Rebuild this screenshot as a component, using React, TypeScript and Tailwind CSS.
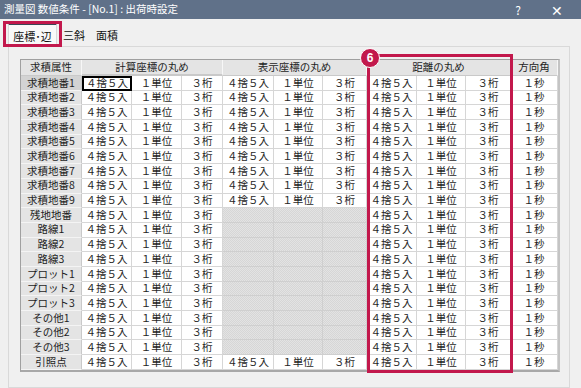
import React from "react";

const rowNames = [
  "求積地番1",
  "求積地番2",
  "求積地番3",
  "求積地番4",
  "求積地番5",
  "求積地番6",
  "求積地番7",
  "求積地番8",
  "求積地番9",
  "残地地番",
  "路線1",
  "路線2",
  "路線3",
  "プロット1",
  "プロット2",
  "プロット3",
  "その他1",
  "その他2",
  "その他3",
  "引照点",
];

const cellCls =
  "flex items-center justify-center border-r border-b border-[#d6d6d6] bg-white text-[#1e1e1e] whitespace-nowrap";
const headCls =
  "flex items-center justify-center border-r border-b border-r-[#f7f7f7] border-b-[#c9c9c9] bg-[#e4e4e4] text-[#1e1e1e] whitespace-nowrap";
const emptyCls =
  "border-r border-b border-[#cfcfcf] bg-[#dedede] bg-[repeating-conic-gradient(#d6d6d6_0%_25%,#e3e3e3_0%_50%)] bg-[length:2px_2px]";

function Group({ disabled }: { disabled?: boolean }) {
  if (disabled) {
    return (
      <>
        <div className={emptyCls} />
        <div className={emptyCls} />
        <div className={emptyCls} />
      </>
    );
  }
  return (
    <>
      <div className={cellCls}>４捨５入</div>
      <div className={cellCls}>１単位</div>
      <div className={cellCls}>３桁</div>
    </>
  );
}

export default function App() {
  return (
    <div className="w-[581px] h-[388px] overflow-hidden bg-[#f0f0f0] flex flex-col font-['Noto_Sans_CJK_JP','Noto_Sans',sans-serif] text-[10.5px] leading-none">
      {/* title bar */}
      <div className="h-[19px] shrink-0 bg-[#607189] flex items-center justify-between pl-[4px] pr-[18px] text-white">
        <span className="text-[10.5px]">測量図 数値条件 - [No.1] : 出荷時設定</span>
        <div className="flex items-center gap-[30px] text-[12px]">
          <span>?</span>
          <span className="text-[14px]">✕</span>
        </div>
      </div>

      {/* tabs */}
      <div className="relative h-[27px] shrink-0 flex items-end pl-[8px]">
        <div className="relative z-10 w-[49px] h-[24px] -mb-px flex items-center justify-center bg-[#f9f9f9] border border-[#d9d9d9] border-b-0 border-t-2 border-t-[#3b4656] text-[11px] text-[#111]">
          座標･辺
        </div>
        <div className="h-[22px] flex items-center pl-[6px] pr-[11px] text-[11px] text-[#111]">三斜</div>
        <div className="h-[22px] flex items-center text-[11px] text-[#111]">面積</div>
        <div className="absolute left-[3px] top-[2px] w-[59px] h-[26px] border-[3px] border-[#c2184c] z-20" />
      </div>

      {/* panel */}
      <div className="ml-[8px] w-[562px] flex-1 border border-[#d9d9d9] pt-[12px] pl-[11px]">
        <div className="relative w-[540px]">
          <div className="border border-[#a0a0a0] border-r-2 border-b-2 border-r-[#c4c4c4] border-b-[#a8a8a8]">
            <div className="grid grid-cols-[61px_50px_50px_41px_51px_49px_44px_50px_49px_45px_47px] grid-rows-[16px_repeat(20,14.7px)]">
              <div className={headCls}>求積属性</div>
              <div className={`${headCls} col-span-3 bg-[#d7d7d7] border-b-2 border-b-[#2e3d56]`}>
                計算座標の丸め
              </div>
              <div className={`${headCls} col-span-3`}>表示座標の丸め</div>
              <div className={`${headCls} col-span-3`}>距離の丸め</div>
              <div className={headCls}>方向角</div>

              {rowNames.map((name, i) => (
                <React.Fragment key={name}>
                  <div
                    className={`flex items-center justify-center border-r border-b border-r-[#c9c9c9] border-b-[#f4f4f4] text-[#1e1e1e] whitespace-nowrap ${
                      i === 0 ? "bg-[#d3d3d3]" : "bg-[#e4e4e4]"
                    }`}
                  >
                    {name}
                  </div>
                  {i === 0 ? (
                    <div className="flex items-center justify-center border-2 border-black bg-white text-[#1e1e1e] whitespace-nowrap">
                      ４捨５入
                    </div>
                  ) : (
                    <div className={cellCls}>４捨５入</div>
                  )}
                  <div className={cellCls}>１単位</div>
                  <div className={cellCls}>３桁</div>
                  <Group disabled={i >= 9 && i <= 18} />
                  <Group />
                  <div className={cellCls}>１秒</div>
                </React.Fragment>
              ))}
            </div>
          </div>

          {/* highlight box */}
          <div className="absolute left-[347px] top-[-5px] w-[146px] h-[319px] border-[3px] border-[#c2184c]" />
          <div className="absolute left-[340px] top-[-11px] w-[20px] h-[20px] rounded-full bg-[#c2184c] border-[1.5px] border-white flex items-center justify-center text-white text-[12px] font-bold font-['Liberation_Sans',sans-serif]">
            6
          </div>
        </div>
      </div>
    </div>
  );
}
